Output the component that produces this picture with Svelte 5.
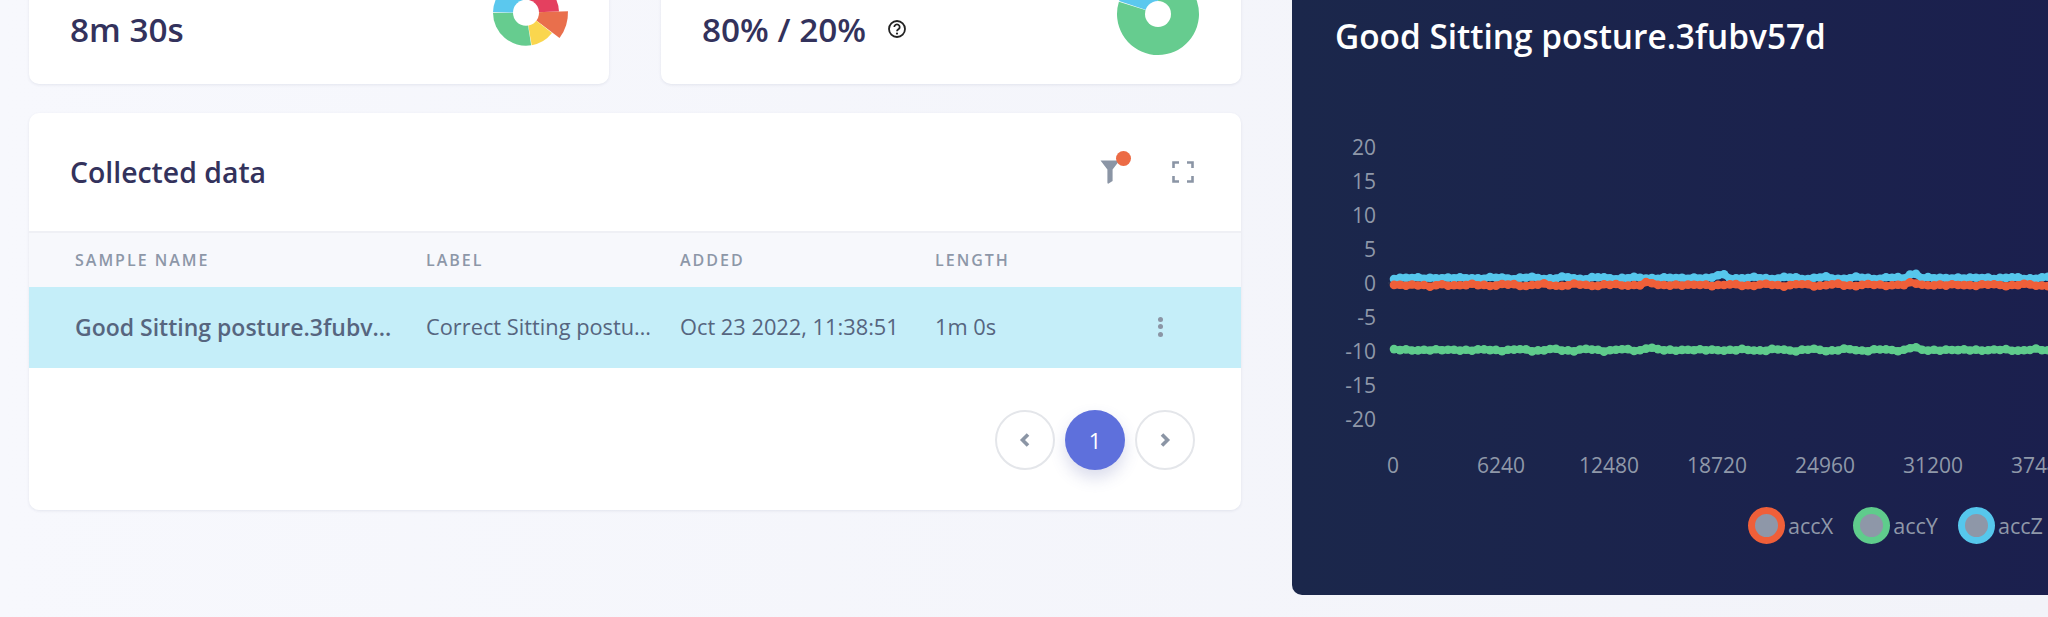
<script>
    const slices1 = [
        { from: 0.8, to: 88, r: 33, color: '#e4405f' },
        { from: 88, to: 127, r: 42, color: '#e96f4c' },
        { from: 128, to: 170, r: 33, color: '#fad64e' },
        { from: 171, to: 270, r: 33, color: '#66cc8f' },
        { from: 271, to: 359.2, r: 33, color: '#5bc8ee' }
    ];
    const slices2 = [
        { from: 0.4, to: 287.5, r: 41, color: '#66cc8f' },
        { from: 288.5, to: 359.6, r: 41, color: '#5bc8ee' }
    ];

    const arc = (s, cx, cy) => {
        const point = (angle, r) => {
            const rad = ((angle - 90) * Math.PI) / 180;
            return `${(cx + r * Math.cos(rad)).toFixed(2)} ${(cy + r * Math.sin(rad)).toFixed(2)}`;
        };
        const large = s.to - s.from > 180 ? 1 : 0;
        return `M${point(s.from, 10)} L${point(s.from, s.r)} A${s.r} ${s.r} 0 ${large} 1 ${point(s.to, s.r)} L${point(s.to, 10)} Z`;
    };

    const yTicks = [20, 15, 10, 5, 0, -5, -10, -15, -20];
    const xTicks = [0, 6240, 12480, 18720, 24960, 31200, 37440];
    const yPos = (v) => 283 - v * 6.8;
    const xPos = (i) => 101 + i * 108;

    // seeded wobble so the traces look like sensor data
    const trace = (base, seed, bumps) => {
        let pts = [];
        for (let x = 102; x <= 770; x += 6) {
            let w = Math.sin(x * 0.43 + seed) * 0.6 + Math.sin(x * 0.17 + seed * 2) * 0.6 + Math.sin(x * 1.9 + seed) * 0.5;
            for (const [bx, h] of bumps) {
                if (Math.abs(x - bx) < 6) w += h;
            }
            pts.push([x, +(base + w).toFixed(1)]);
        }
        return pts;
    };

    const series = [
        { name: 'accZ', color: '#56c7ec', points: trace(278, 1.2, [[428, -3], [620, -4]]) },
        { name: 'accX', color: '#ef5f39', points: trace(285, 3.1, [[138, 2], [356, -2], [620, -2]]) },
        { name: 'accY', color: '#5fcc8c', points: trace(350, 5.4, [[358, -2], [622, -2]]) }
    ];

    const legend = [
        { name: 'accX', color: '#ef5f39' },
        { name: 'accY', color: '#5fcc8c' },
        { name: 'accZ', color: '#56c7ec' }
    ];
</script>

<div class="page">
    <div class="left">
        <div class="stats">
            <div class="card stat-card">
                <div class="stat">
                    <div class="stat-label">Data collected</div>
                    <div class="stat-value">8m 30s</div>
                </div>
                <svg class="donut" viewBox="0 0 100 100" width="100" height="100">
                    {#each slices1 as s}
                        <path d={arc(s, 50, 50.7)} fill={s.color} />
                    {/each}
                    <circle cx="50" cy="50.7" r="13" fill="#fff" />
                </svg>
            </div>
            <div class="card stat-card">
                <div class="stat">
                    <div class="stat-label">Train / test split</div>
                    <div class="stat-value">
                        80% / 20%
                        <svg class="help" viewBox="0 0 20 20" width="20" height="20">
                            <circle cx="10" cy="10" r="8" fill="none" stroke="#222" stroke-width="1.8" />
                            <path d="M7.3 8a2.7 2.6 0 1 1 4.2 2.2c-1 .7-1.5 1-1.5 2" fill="none" stroke="#222" stroke-width="1.8" />
                            <circle cx="10" cy="14.6" r="1.1" fill="#222" />
                        </svg>
                    </div>
                </div>
                <svg class="donut" viewBox="0 0 100 100" width="100" height="100">
                    {#each slices2 as s}
                        <path d={arc(s, 50, 52)} fill={s.color} />
                    {/each}
                    <circle cx="50" cy="52" r="13" fill="#fff" />
                </svg>
            </div>
        </div>

        <div class="card data-card">
            <div class="data-head">
                <h2>Collected data</h2>
                <div class="tools">
                    <span class="filter">
                        <svg viewBox="0 0 20 24" width="20" height="24">
                            <path d="M0.5 0.5H19.5L12.6 9.6V21L8.600 23.500Q7.400 24 7.400 22.500V9.600Z" fill="#8b95a5" />
                        </svg>
                        <i class="dot"></i>
                    </span>
                    <svg viewBox="0 0 22 22" width="22" height="22">
                        <path d="M1.5 7V1.5H7M15 1.5H20.5V7M20.5 15V20.5H15M7 20.5H1.5V15" fill="none" stroke="#8b95a5" stroke-width="2.6" />
                    </svg>
                </div>
            </div>

            <div class="row head-row">
                <div>SAMPLE NAME</div>
                <div>LABEL</div>
                <div>ADDED</div>
                <div>LENGTH</div>
                <div></div>
            </div>
            <div class="row sample-row">
                <div class="name cell">Good Sitting posture.3fubv57d</div>
                <div class="cell">Correct Sitting posture</div>
                <div class="cell">Oct 23 2022, 11:38:51</div>
                <div class="cell">1m 0s</div>
                <div class="more"><i></i><i></i><i></i></div>
            </div>

            <div class="pager">
                <button class="page-btn" aria-label="Previous">
                    <svg viewBox="0 0 12 16" width="12" height="16">
                        <path d="M9 2.500L3.500 8L9 13.500" fill="none" stroke="#8b95a5" stroke-width="3.600" />
                    </svg>
                </button>
                <button class="page-btn active">1</button>
                <button class="page-btn" aria-label="Next">
                    <svg viewBox="0 0 12 16" width="12" height="16">
                        <path d="M3 2.500L8.500 8L3 13.500" fill="none" stroke="#8b95a5" stroke-width="3.600" />
                    </svg>
                </button>
            </div>
        </div>
    </div>

    <div class="panel">
        <h1>Good Sitting posture.3fubv57d</h1>
        <svg class="chart" viewBox="1292 120 756 370" width="756" height="370">
            <g transform="translate(1292 0)">
                <line x1="96" x2="102" y1="283" y2="283" stroke="#333b55" />
                {#each yTicks as t}
                    <text class="tick" x="84" y={yPos(t) + 7.500} text-anchor="end">{t}</text>
                {/each}
                {#each xTicks as t, i}
                    <text class="tick" x={xPos(i)} y="473" text-anchor="middle">{t}</text>
                {/each}
                {#each series as s}
                    <polyline points={s.points.join(' ')} fill="none" stroke={s.color} stroke-width="7" stroke-linejoin="round" />
                    {#each s.points as p}
                        <circle cx={p[0]} cy={p[1]} r="4.300" fill={s.color} />
                    {/each}
                {/each}
            </g>
        </svg>
        <div class="legend">
            {#each legend as l}
                <div class="legend-item">
                    <span class="swatch" style="border-color: {l.color}"></span>
                    <span>{l.name}</span>
                </div>
            {/each}
        </div>
    </div>
</div>

<style>
    :global(body) {
        background: linear-gradient(90deg, #f7f8fd, #f2f3f9);
        overflow: hidden;
    }

    .page {
        display: flex;
        height: 617px;
        overflow: hidden;
        padding-left: 29px;
        gap: 51px;
        font-family: "Open Sans", "Liberation Sans", sans-serif;
    }

    .left {
        width: 1212px;
        flex-shrink: 0;
    }

    .stats {
        display: flex;
        gap: 52px;
        margin-top: -60px;
    }

    .card {
        background: #fff;
        border-radius: 10px;
        box-shadow: 0 1px 3px rgba(60, 70, 110, 0.1);
    }

    .stat-card {
        flex: 1;
        height: 144px;
        display: flex;
        justify-content: space-between;
        align-items: center;
        padding: 0 33px 0 41px;
    }

    .stat {
        align-self: flex-end;
        margin-bottom: 36px;
    }

    .stat-label {
        font-size: 16px;
        color: #8d97a8;
        margin-bottom: 12px;
    }

    .stat-value {
        display: flex;
        align-items: center;
        gap: 21px;
        font-size: 33.3px;
        line-height: 38px;
        font-weight: 600;
        color: #33325c;
    }

    .data-card {
        margin-top: 29px;
        height: 397px;
        overflow: hidden;
    }

    .data-head {
        height: 118px;
        display: flex;
        justify-content: space-between;
        align-items: center;
        padding: 0 47px 0 41px;
        border-bottom: 2px solid #eff0f5;
    }

    h2 {
        margin: 0;
        font-size: 28.4px;
        font-weight: 600;
        color: #33325c;
    }

    .tools {
        display: flex;
        align-items: center;
        gap: 52px;
    }

    .filter {
        position: relative;
        display: block;
        height: 24px;
    }

    .dot {
        position: absolute;
        top: -9px;
        right: -11px;
        width: 15px;
        height: 15px;
        border-radius: 50%;
        background: #ec6b45;
    }

    .row {
        display: grid;
        grid-template-columns: 351px 254px 255px 1fr 40px;
        align-items: center;
        padding-left: 46px;
        padding-right: 61px;
    }

    .head-row {
        height: 53px;
        padding-bottom: 1px;
        background: #f7f8fc;
        font-size: 16px;
        font-weight: 600;
        letter-spacing: 2px;
        color: #8d97a8;
    }

    .sample-row {
        height: 79px;
        padding-bottom: 2px;
        background: #c5eef9;
        font-size: 21.8px;
        color: #56657f;
    }

    .cell {
        overflow: hidden;
        white-space: nowrap;
        text-overflow: ellipsis;
        padding-right: 26px;
    }

    .name {
        font-size: 23px;
        font-weight: 600;
    }

    .more {
        display: flex;
        flex-direction: column;
        align-items: center;
        gap: 2.5px;
    }

    .more i {
        width: 5px;
        height: 5px;
        border-radius: 50%;
        background: #8b95a5;
    }

    .pager {
        display: flex;
        justify-content: flex-end;
        gap: 10px;
        padding: 42px 46px 0 0;
    }

    .page-btn {
        width: 60px;
        height: 60px;
        padding: 0;
        display: flex;
        align-items: center;
        justify-content: center;
        border-radius: 50%;
        border: 2px solid #e4e6ea;
        background: #fff;
        font-family: inherit;
    }

    .page-btn.active {
        border: none;
        background: #5e70dc;
        color: #fff;
        font-size: 22px;
        box-shadow: 0 8px 16px rgba(70, 80, 160, 0.2);
    }

    .panel {
        width: 800px;
        flex-shrink: 0;
        height: 595px;
        border-radius: 0 0 10px 10px;
        background: linear-gradient(90deg, #1b274b, #1b1f4e);
        color: #fff;
    }

    h1 {
        margin: 0;
        padding: 16px 0 0 43px;
        font-size: 33.4px;
        line-height: 40px;
        font-weight: 600;
    }

    .chart {
        display: block;
        margin-top: 64px;
    }

    .tick {
        font-size: 21px;
        fill: #8f98a9;
        font-family: "Open Sans", sans-serif;
    }

    .legend {
        display: flex;
        gap: 20px;
        padding: 17px 0 0 456px;
        font-size: 21.6px;
        color: #8f98a9;
    }

    .legend-item {
        display: flex;
        align-items: center;
        gap: 3px;
    }

    .swatch {
        width: 37px;
        height: 37px;
        box-sizing: border-box;
        border-radius: 50%;
        border: 7px solid;
        background: #8e97a8;
    }
</style>
